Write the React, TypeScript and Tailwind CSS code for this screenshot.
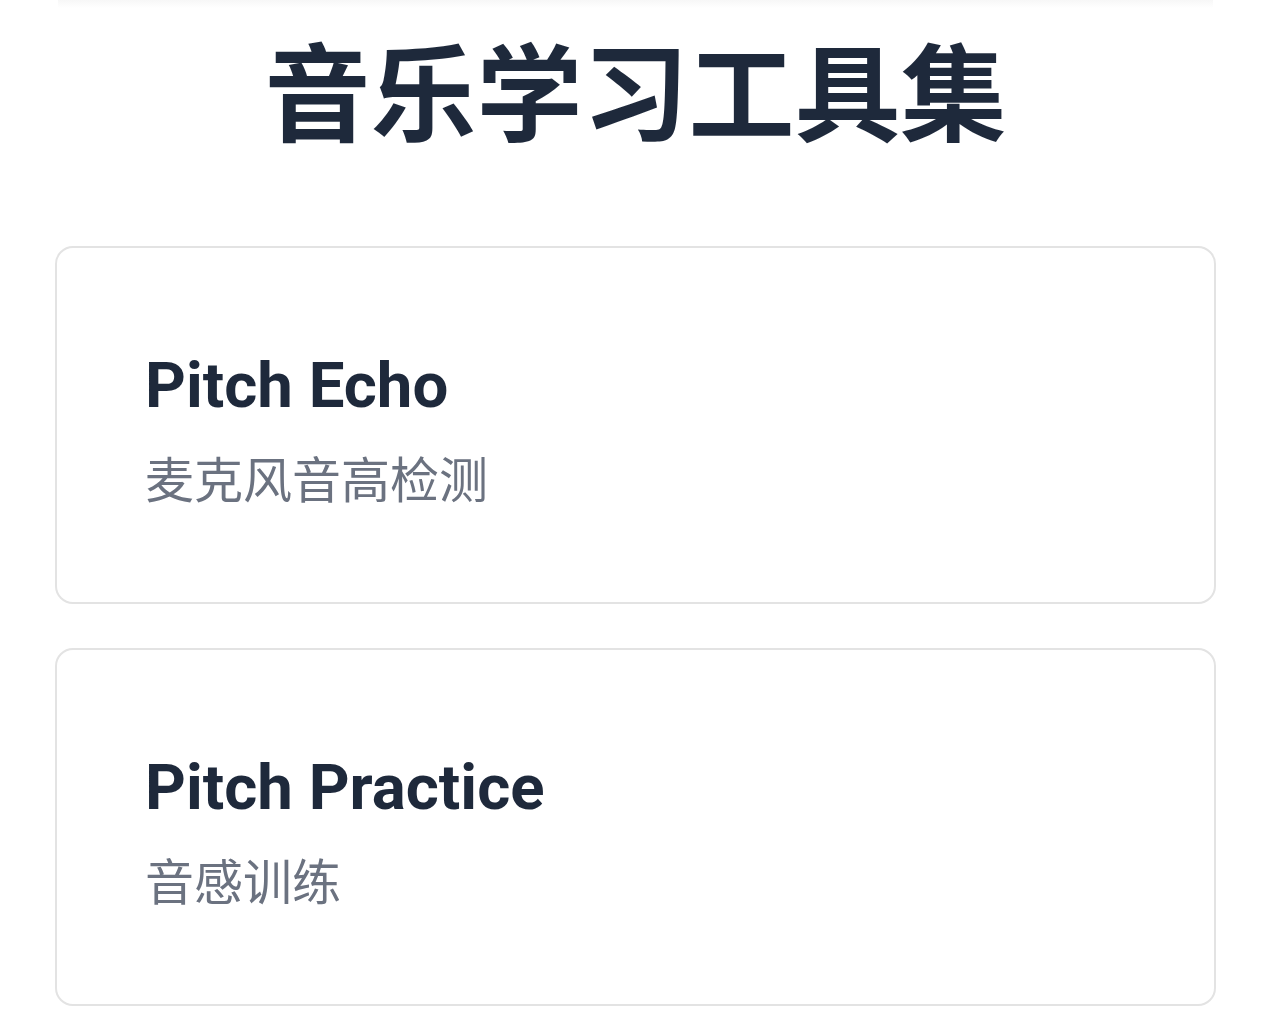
const tools = [
  { name: "Pitch Echo", desc: "麦克风音高检测" },
  { name: "Pitch Practice", desc: "音感训练" },
];

export default function App() {
  return (
    <div className="min-h-screen bg-white">
      {/* faint edge of the element above */}
      <div className="mx-[58px] h-[8px] bg-gradient-to-b from-[#f7f7f7] to-white" />

      <div className="px-[55px]">
        <h1 className="mt-[4px] text-center text-[106px] font-bold leading-[150px] text-[#1e293b] [font-family:'Noto_Sans_CJK_SC',sans-serif]">
          音乐学习工具集
        </h1>

        <div className="mt-[84px] flex flex-col gap-[44px]">
          {tools.map((tool) => (
            <div
              key={tool.name}
              className="flex h-[358px] flex-col rounded-[18px] border-2 border-[#e3e3e3] bg-white px-[88px] pt-[100px]"
            >
              <h2 className="text-[63.5px] font-bold leading-[76px] text-[#1e293b] [font-family:Roboto,'Noto_Sans_CJK_SC',sans-serif]">
                {tool.name}
              </h2>
              <p className="mt-[26px] text-[49px] leading-[64px] text-[#6b7280] [font-family:Roboto,'Noto_Sans_CJK_SC',sans-serif]">
                {tool.desc}
              </p>
            </div>
          ))}
        </div>
      </div>
    </div>
  );
}
